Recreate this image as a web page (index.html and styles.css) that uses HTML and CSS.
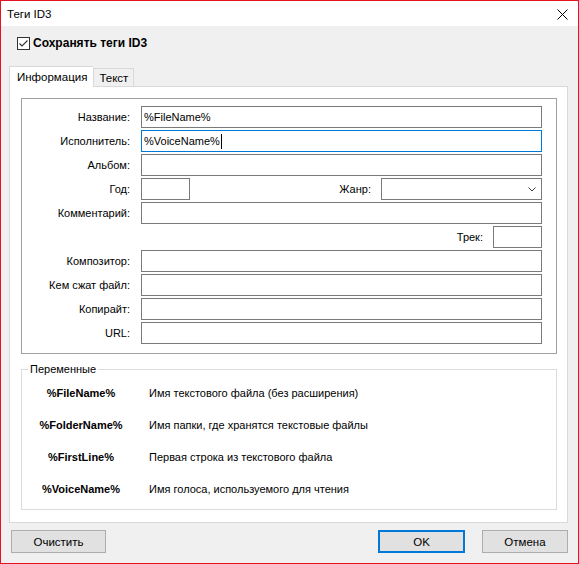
FILE: index.html
```html
<!DOCTYPE html>
<html lang="ru">
<head>
<meta charset="utf-8">
<title>Теги ID3</title>
<link rel="stylesheet" href="styles.css">
</head>
<body>
<div class="window">
  <div class="titlebar">
    <span class="title">Теги ID3</span>
    <svg class="close" width="11" height="11" viewBox="0 0 11 11"><path d="M0.5 0.5 L10.5 10.5 M10.5 0.5 L0.5 10.5" stroke="#000" stroke-width="1" fill="none"/></svg>
  </div>
  <div class="body">
    <div class="save">
      <span class="checkbox"><svg width="11" height="11" viewBox="0 0 11 11"><path d="M1.5 5.5 L4 8 L9.5 2.5" stroke="#333" stroke-width="1.1" fill="none"/></svg></span>
      <span class="save-label">Сохранять теги ID3</span>
    </div>
    <div class="tabs">
      <div class="tab active">Информация</div>
      <div class="tab">Текст</div>
    </div>
    <div class="panel">
      <div class="group form">
        <span class="lbl">Название:</span><div class="field">%FileName%</div>
        <span class="lbl">Исполнитель:</span><div class="field focus">%VoiceName%<span class="caret"></span></div>
        <span class="lbl">Альбом:</span><div class="field"></div>
        <span class="lbl">Год:</span>
        <div class="split">
          <div class="field year"></div>
          <span class="lbl grow">Жанр:</span>
          <div class="field select"><svg width="8" height="5" viewBox="0 0 8 5"><path d="M0.5 0.5 L4 4 L7.5 0.5" stroke="#444" stroke-width="1" fill="none"/></svg></div>
        </div>
        <span class="lbl">Комментарий:</span><div class="field"></div>
        <span class="lbl"></span>
        <div class="split end">
          <span class="lbl">Трек:</span>
          <div class="field year"></div>
        </div>
        <span class="lbl">Композитор:</span><div class="field"></div>
        <span class="lbl">Кем сжат файл:</span><div class="field"></div>
        <span class="lbl">Копирайт:</span><div class="field"></div>
        <span class="lbl">URL:</span><div class="field"></div>
      </div>
      <fieldset class="vars">
        <legend>Переменные</legend>
        <div class="var-grid">
          <span class="vname">%FileName%</span><span class="vdesc">Имя текстового файла (без расширения)</span>
          <span class="vname">%FolderName%</span><span class="vdesc">Имя папки, где хранятся текстовые файлы</span>
          <span class="vname">%FirstLine%</span><span class="vdesc">Первая строка из текстового файла</span>
          <span class="vname">%VoiceName%</span><span class="vdesc">Имя голоса, используемого для чтения</span>
        </div>
      </fieldset>
    </div>
    <div class="buttons">
      <div class="btn clear">Очистить</div>
      <div class="spacer"></div>
      <div class="btn default">OK</div>
      <div class="btn cancel">Отмена</div>
    </div>
  </div>
</div>
</body>
</html>
```
FILE: styles.css
```css
* { box-sizing: border-box; }
html, body { margin: 0; padding: 0; }
body {
  font-family: "Liberation Sans", Arial, sans-serif;
  font-size: 11px;
  line-height: 16px;
  color: #000;
  background: #f0f0f0;
}
.window {
  width: 579px;
  height: 564px;
  border: 1px solid #e81123;
  background: #f0f0f0;
  display: flex;
  flex-direction: column;
}
.titlebar {
  height: 25px;
  background: #fff;
  display: flex;
  align-items: center;
  justify-content: space-between;
  padding: 0 10px 0 6px;
  flex: none;
  font-size: 11.5px;
}
.close { display: block; margin-top: 1px; }
.body {
  flex: 1;
  display: flex;
  flex-direction: column;
  padding: 0 10px 0 8px;
}
.save {
  margin-top: 9px;
  height: 16px;
  display: flex;
  align-items: center;
  padding-left: 8px;
}
.checkbox {
  width: 13px;
  height: 13px;
  border: 1px solid #333;
  background: #fff;
  display: flex;
  align-items: center;
  justify-content: center;
}
.checkbox svg { display: block; }
.save-label {
  font-weight: bold;
  font-size: 12px;
  margin-left: 3px;
}
.tabs {
  margin-top: 15px;
  height: 21px;
  display: flex;
  align-items: flex-end;
  position: relative;
  z-index: 1;
}
.tab {
  height: 18px;
  margin-bottom: 1px;
  padding: 0 5px;
  border: 1px solid #d9d9d9;
  border-bottom: none;
  background: #f0f0f0;
  display: flex;
  align-items: center;
  font-size: 11.5px;
}
.tab.active {
  height: 21px;
  margin-bottom: 0;
  padding: 0 6px 0 7px;
  background: #fff;
  border-right: none;
}
.panel {
  margin-top: -1px;
  background: #fff;
  border: 1px solid #d9d9d9;
  padding: 11px 10px 12px 11px;
}
.group {
  border: 1px solid #a0a0a0;
}
.form {
  display: grid;
  grid-template-columns: 108px 1fr;
  column-gap: 11px;
  row-gap: 2px;
  grid-auto-rows: 22px;
  padding: 7px 14px 9px 0;
}
.lbl {
  text-align: right;
  align-self: center;
  white-space: nowrap;
}
.field {
  height: 22px;
  border: 1px solid #7a7a7a;
  background: #fff;
  padding: 0 2px;
  display: flex;
  align-items: center;
  white-space: nowrap;
}
.field.focus { border-color: #0078d7; }
.caret {
  display: inline-block;
  width: 1px;
  height: 15px;
  background: #000;
  margin-left: 1px;
}
.split {
  display: flex;
  align-items: center;
}
.split.end { justify-content: flex-end; }
.year { width: 49px; flex: none; }
.grow { flex: 1; }
.split .lbl { margin-right: 10px; }
.select {
  width: 161px;
  flex: none;
  justify-content: flex-end;
  padding-right: 5px;
}
.select svg { display: block; }
.vars {
  margin: 7px 0 0 0;
  padding: 0 0 4px 0;
  border: 1px solid #dcdcdc;
  min-width: 0;
}
.vars legend {
  margin-left: 6px;
  padding: 0 2px;
  line-height: 16px;
}
.var-grid {
  display: grid;
  grid-template-columns: 118px 1fr;
  column-gap: 9px;
  grid-auto-rows: 32px;
  align-items: center;
}
.vname {
  font-weight: bold;
  font-size: 11px;
  text-align: center;
}
.buttons {
  margin-top: 7px;
  display: flex;
  padding-left: 2px;
}
.spacer { flex: 1; }
.btn {
  height: 23px;
  border: 1px solid #adadad;
  background: #e1e1e1;
  display: flex;
  align-items: center;
  justify-content: center;
  font-size: 11.5px;
}
.clear { width: 95px; }
.default { width: 87px; border: 2px solid #0078d7; margin-right: 17px; }
.cancel { width: 86px; }
```
